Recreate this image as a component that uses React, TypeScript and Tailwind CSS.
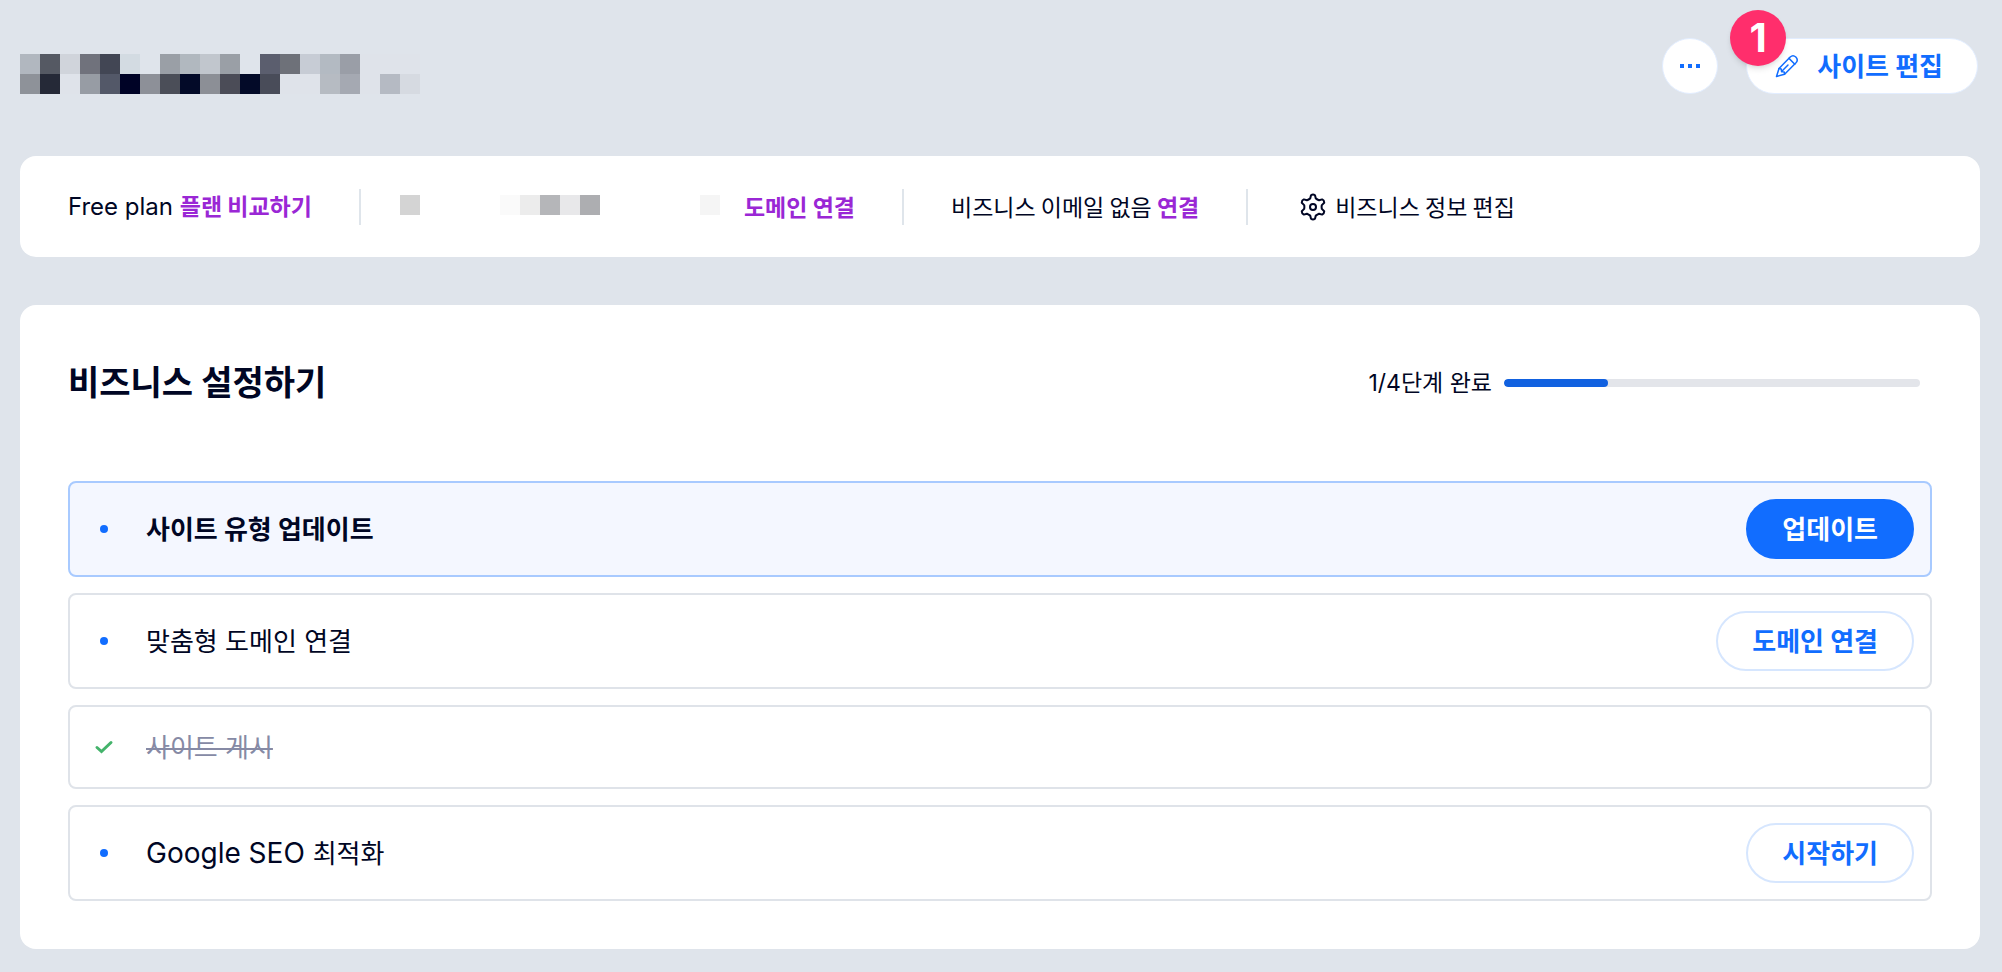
const INK = '#000624';

// Obscured site name, one colour per 20px block
const TITLE_BLOCKS = [
  ['#b1b7bf', '#555963', '#d0d4db', '#70727c', '#424654', '#d3dbe2', '#dfe4eb', '#9a9fa6', '#b1b8bf', '#c1c6cd', '#9a9fa6', '#dfe4eb', '#5b5e6e', '#6e7179', '#c7ccd5', '#b3bac2', '#9a9ea7', '#dfe3ea', '#dfe3ea', '#dfe3ea'],
  ['#8e9299', '#252937', '#dfe3ea', '#979ca4', '#535868', '#000326', '#8d9098', '#4b4e58', '#030a28', '#8c8f96', '#4b4c57', '#030a28', '#494c59', '#dfe3ea', '#dfe3ea', '#b6bbc2', '#a5a9b2', '#dfe3ea', '#b5bac3', '#d6dae1'],
];

const DOMAIN_BLOCKS = ['#d4d4d4', '#fff', '#fff', '#fff', '#fff', '#fafafa', '#ececec', '#b5b6b9', '#e8e8ea', '#adaeb1', '#fff', '#fff', '#fff', '#fff', '#fff', '#f5f5f5'];

interface Step {
  latin?: string;
  label: string;
  action?: string;
  active?: boolean;
  done?: boolean;
}

const steps: Step[] = [
  { label: '사이트 유형 업데이트', action: '업데이트', active: true },
  { label: '맞춤형 도메인 연결', action: '도메인 연결' },
  { label: '사이트 게시', done: true },
  { latin: 'Google SEO', label: '최적화', action: '시작하기' },
];

const Blocks = ({ colors }: { colors: string[] }) => (
  <div className="flex">
    {colors.map((color, i) => (
      <span key={i} className="size-5" style={{ backgroundColor: color }} />
    ))}
  </div>
);

const PencilIcon = () => (
  <svg className="size-6" viewBox="0 0 24 24" fill="none" stroke="currentColor" strokeWidth="1.5" strokeLinejoin="round" strokeLinecap="round" aria-hidden="true">
    <path d="M1.5 22.5 L4 14.5 L15.2 3 Q18 0.4 20.8 3 Q23.6 6 21 8.8 L9.6 20.2 Z" />
    <path d="M4 14.5 L6.2 15 L6.6 17.6 L9.2 18 L9.6 20.2 M6.6 17.6 L13 11 M14 4.4 L19.8 10.2" />
  </svg>
);

const GearIcon = () => (
  <svg className="size-7" viewBox="0 0 28 28" fill="none" stroke="currentColor" strokeWidth="2" strokeLinejoin="round" aria-hidden="true">
    <path d="M12 2.2 Q14 .8 16 2.2 L16.8 5.4 Q18.3 6.6 20.05 7.28 L23.2 6.4 Q25.4 7.4 25.2 9.8 L22.85 12.1 Q22.4 14 22.85 15.9 L25.2 18.2 Q25.4 20.6 23.2 21.6 L20.05 20.72 Q18.3 21.4 16.8 22.6 L16 25.8 Q14 27.2 12 25.8 L11.2 22.6 Q9.7 21.4 7.95 20.72 L4.8 21.6 Q2.6 20.6 2.8 18.2 L5.15 15.9 Q5.6 14 5.15 12.1 L2.8 9.8 Q2.6 7.4 4.8 6.4 L7.95 7.28 Q9.7 6.6 11.2 5.4 Z" />
    <circle cx="14" cy="14" r="3" />
  </svg>
);

const Divider = () => <span className="mx-[47px] h-9 w-0.5 bg-[#dfe5eb]" />;

const StepRow = ({ latin, label, action, active, done }: Step) => (
  <li
    className={`flex items-center rounded-lg border-2 pr-4 pl-6 ${
      active ? 'border-[#a8caff] bg-[#f4f7ff]' : 'border-[#dfe3e9] bg-white'
    } ${done ? 'h-[84px]' : 'h-24'}`}
  >
    <span className="flex w-5 justify-center">
      {done ? (
        <svg className="h-4 w-5" viewBox="0 0 20 16" fill="none" stroke="#44b36b" strokeWidth="3" strokeLinecap="round" aria-hidden="true">
          <path d="M3 8.5 L7.5 12.5 L17 3.5" />
        </svg>
      ) : (
        <span className="size-2 rounded-full bg-[#116dff]" />
      )}
    </span>
    <span className={`ml-8 flex-1 text-[26px] ${active ? 'font-bold' : ''} ${done ? 'text-[#868aa5] line-through decoration-2' : ''}`}>
      {latin && <span className="text-[28px]">{latin} </span>}
      {label}
    </span>
    {action && (
      <button
        type="button"
        className={`h-[60px] rounded-full border-2 px-[34px] text-[26px] font-bold ${
          active ? 'border-[#116dff] bg-[#116dff] text-white' : 'border-[#d6e6fe] bg-white text-[#116dff]'
        }`}
      >
        {action}
      </button>
    )}
  </li>
);

const App = () => {
  const doneCount = steps.filter((step) => step.done).length;

  return (
    <div
      className="min-h-screen bg-[#dfe4eb] pr-[22px] pb-6 pl-5 font-['Inter','Noto_Sans_CJK_KR',sans-serif]"
      style={{ color: INK }}
    >
      <header className="flex items-start justify-between pt-[38px] pr-0.5">
        <div className="pt-4">
          <Blocks colors={TITLE_BLOCKS[0]} />
          <Blocks colors={TITLE_BLOCKS[1]} />
        </div>
        <div className="flex gap-7">
          <button type="button" aria-label="더보기" className="flex size-14 items-center justify-center gap-1 rounded-full border border-[#e2edff] bg-white">
            <span className="size-1 bg-[#116dff]" />
            <span className="size-1 bg-[#116dff]" />
            <span className="size-1 bg-[#116dff]" />
          </button>
          <div className="relative">
            <button type="button" className="flex h-14 items-center gap-[18px] rounded-full border border-[#e2edff] bg-white pr-[34px] pl-7 text-[26px] font-bold text-[#116dff]">
              <PencilIcon />
              사이트 편집
            </button>
            <span className="absolute -top-7 -left-4 flex size-14 items-center justify-center rounded-full bg-[#ff2e6c] text-[40px] font-bold text-white shadow-md">
              1
            </span>
          </div>
        </div>
      </header>

      <section className="mt-[62px] flex h-[101px] items-center rounded-2xl bg-white px-12 font-['Noto_Sans_CJK_KR',sans-serif] text-[23px]">
        <p>
          <span className="font-['Inter',sans-serif] text-[24px]">Free plan </span>
          <a href="#plans" className="font-bold text-[#9a27d5]">플랜 비교하기</a>
        </p>
        <Divider />
        <div className="-ml-2 pb-1">
          <Blocks colors={DOMAIN_BLOCKS} />
        </div>
        <a href="#domain" className="ml-6 font-bold text-[#9a27d5]">도메인 연결</a>
        <Divider />
        <p>
          비즈니스 이메일 없음 <a href="#email" className="font-bold text-[#9a27d5]">연결</a>
        </p>
        <Divider />
        <a href="#business-info" className="ml-1 flex items-center gap-2">
          <GearIcon />
          비즈니스 정보 편집
        </a>
      </section>

      <main className="mt-12 rounded-2xl bg-white px-12 pt-12 pb-12">
        <div className="flex items-center justify-between pr-3">
          <h1 className="text-[34px] leading-[60px] font-bold">비즈니스 설정하기</h1>
          <div className="flex items-center gap-3">
            <span className="text-[23px]">
              {doneCount}/{steps.length}단계 완료
            </span>
            <div className="h-2 w-[416px] overflow-hidden rounded-full bg-[#e3e5ea]">
              <div className="h-full rounded-full bg-[#1161e0]" style={{ width: `${(doneCount / steps.length) * 100}%` }} />
            </div>
          </div>
        </div>
        <ul className="mt-[68px] flex flex-col gap-4">
          {steps.map((step) => (
            <StepRow key={step.label} {...step} />
          ))}
        </ul>
      </main>
    </div>
  );
};

export default App;
